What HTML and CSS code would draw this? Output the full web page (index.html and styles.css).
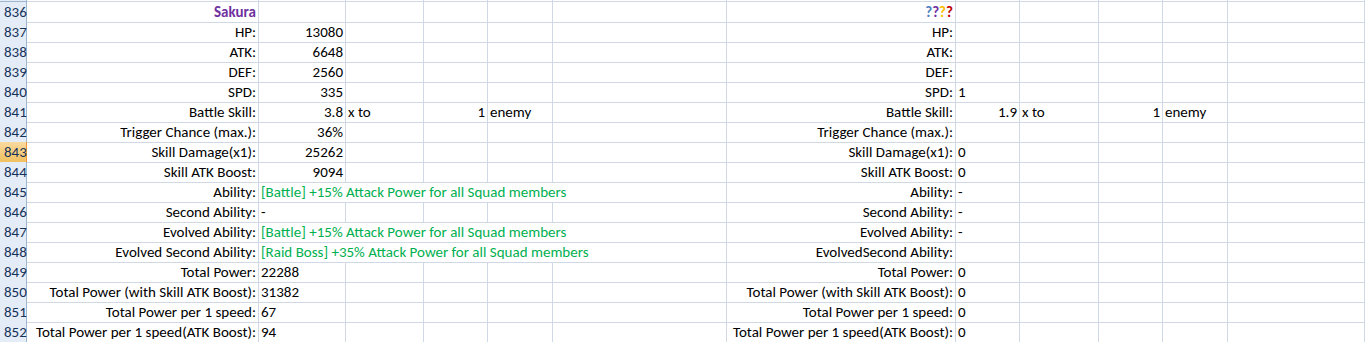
FILE: index.html
```html
<!DOCTYPE html>
<html>
<head>
<meta charset="utf-8">
<link rel="stylesheet" href="styles.css">
</head>
<body>
<div class="sheet">
  <div class="row top"><div class="rh"></div><div class="c"></div><div class="c"></div><div class="c"></div><div class="c"></div><div class="c"></div><div class="c"></div><div class="c"></div><div class="c"></div><div class="c"></div><div class="c"></div><div class="c"></div><div class="c"></div></div>

  <div class="row"><div class="rh">836</div><div class="c r name">Sakura</div><div class="c"></div><div class="c"></div><div class="c"></div><div class="c"></div><div class="c"></div><div class="c r qq"><span class="q1">?</span><span class="q2">?</span><span class="q3">?</span><span class="q4">?</span></div><div class="c"></div><div class="c"></div><div class="c"></div><div class="c"></div><div class="c"></div></div>

  <div class="row"><div class="rh">837</div><div class="c r">HP:</div><div class="c r">13080</div><div class="c"></div><div class="c"></div><div class="c"></div><div class="c"></div><div class="c r">HP:</div><div class="c"></div><div class="c"></div><div class="c"></div><div class="c"></div><div class="c"></div></div>

  <div class="row"><div class="rh">838</div><div class="c r">ATK:</div><div class="c r">6648</div><div class="c"></div><div class="c"></div><div class="c"></div><div class="c"></div><div class="c r">ATK:</div><div class="c"></div><div class="c"></div><div class="c"></div><div class="c"></div><div class="c"></div></div>

  <div class="row"><div class="rh">839</div><div class="c r">DEF:</div><div class="c r">2560</div><div class="c"></div><div class="c"></div><div class="c"></div><div class="c"></div><div class="c r">DEF:</div><div class="c"></div><div class="c"></div><div class="c"></div><div class="c"></div><div class="c"></div></div>

  <div class="row"><div class="rh">840</div><div class="c r">SPD:</div><div class="c r">335</div><div class="c"></div><div class="c"></div><div class="c"></div><div class="c"></div><div class="c r">SPD:</div><div class="c">1</div><div class="c"></div><div class="c"></div><div class="c"></div><div class="c"></div></div>

  <div class="row"><div class="rh">841</div><div class="c r">Battle Skill:</div><div class="c r">3.8</div><div class="c">x to</div><div class="c r">1</div><div class="c">enemy</div><div class="c"></div><div class="c r">Battle Skill:</div><div class="c r">1.9</div><div class="c">x to</div><div class="c r">1</div><div class="c">enemy</div><div class="c"></div></div>

  <div class="row"><div class="rh">842</div><div class="c r">Trigger Chance (max.):</div><div class="c r">36%</div><div class="c"></div><div class="c"></div><div class="c"></div><div class="c"></div><div class="c r">Trigger Chance (max.):</div><div class="c"></div><div class="c"></div><div class="c"></div><div class="c"></div><div class="c"></div></div>

  <div class="row"><div class="rh sel">843</div><div class="c r">Skill Damage(x1):</div><div class="c r">25262</div><div class="c"></div><div class="c"></div><div class="c"></div><div class="c"></div><div class="c r">Skill Damage(x1):</div><div class="c">0</div><div class="c"></div><div class="c"></div><div class="c"></div><div class="c"></div></div>

  <div class="row"><div class="rh">844</div><div class="c r">Skill ATK Boost:</div><div class="c r">9094</div><div class="c"></div><div class="c"></div><div class="c"></div><div class="c"></div><div class="c r">Skill ATK Boost:</div><div class="c">0</div><div class="c"></div><div class="c"></div><div class="c"></div><div class="c"></div></div>

  <div class="row"><div class="rh">845</div><div class="c r">Ability:</div><div class="c g span5">[Battle] +15% Attack Power for all Squad members</div><div class="c r">Ability:</div><div class="c">-</div><div class="c"></div><div class="c"></div><div class="c"></div><div class="c"></div></div>

  <div class="row"><div class="rh">846</div><div class="c r">Second Ability:</div><div class="c">-</div><div class="c"></div><div class="c"></div><div class="c"></div><div class="c"></div><div class="c r">Second Ability:</div><div class="c">-</div><div class="c"></div><div class="c"></div><div class="c"></div><div class="c"></div></div>

  <div class="row"><div class="rh">847</div><div class="c r">Evolved Ability:</div><div class="c g span5">[Battle] +15% Attack Power for all Squad members</div><div class="c r">Evolved Ability:</div><div class="c">-</div><div class="c"></div><div class="c"></div><div class="c"></div><div class="c"></div></div>

  <div class="row"><div class="rh">848</div><div class="c r">Evolved Second Ability:</div><div class="c g span5">[Raid Boss] +35% Attack Power for all Squad members</div><div class="c r">EvolvedSecond Ability:</div><div class="c"></div><div class="c"></div><div class="c"></div><div class="c"></div><div class="c"></div></div>

  <div class="row"><div class="rh">849</div><div class="c r">Total Power:</div><div class="c">22288</div><div class="c"></div><div class="c"></div><div class="c"></div><div class="c"></div><div class="c r">Total Power:</div><div class="c">0</div><div class="c"></div><div class="c"></div><div class="c"></div><div class="c"></div></div>

  <div class="row"><div class="rh">850</div><div class="c r">Total Power (with Skill ATK Boost):</div><div class="c">31382</div><div class="c"></div><div class="c"></div><div class="c"></div><div class="c"></div><div class="c r">Total Power (with Skill ATK Boost):</div><div class="c">0</div><div class="c"></div><div class="c"></div><div class="c"></div><div class="c"></div></div>

  <div class="row"><div class="rh">851</div><div class="c r">Total Power per 1 speed:</div><div class="c">67</div><div class="c"></div><div class="c"></div><div class="c"></div><div class="c"></div><div class="c r">Total Power per 1 speed:</div><div class="c">0</div><div class="c"></div><div class="c"></div><div class="c"></div><div class="c"></div></div>

  <div class="row"><div class="rh">852</div><div class="c r">Total Power per 1 speed(ATK Boost):</div><div class="c">94</div><div class="c"></div><div class="c"></div><div class="c"></div><div class="c"></div><div class="c r">Total Power per 1 speed(ATK Boost):</div><div class="c">0</div><div class="c"></div><div class="c"></div><div class="c"></div><div class="c"></div></div>
</div>
</body>
</html>
```

FILE: styles.css
```css
html, body {
  margin: 0;
  padding: 0;
  background: #ffffff;
}
body {
  font-family: "Carlito", "Lato", "Liberation Sans", sans-serif;
  font-size: 15px;
  color: #000000;
  overflow: hidden;
}
.sheet {
  width: 1365px;
}
.row {
  display: grid;
  grid-template-columns: 27px 232px 87px 78px 64px 65px 174px 229px 64px 79px 64px 65px 1fr;
  height: 20px;
}
.row.top {
  height: 2px;
}
.c, .rh {
  box-sizing: border-box;
  border-right: 1px solid #d0d7e5;
  border-bottom: 1px solid #d0d7e5;
  white-space: nowrap;
  overflow: visible;
  line-height: 20px;
  padding: 0 2px 0 2px;
}
.c.r {
  text-align: right;
  padding: 0 2px 0 2px;
}
.rh {
  background: #e4ecf7;
  border-color: #9eb6ce;
  color: #15325a;
  padding-left: 4px;
}
.rh.sel {
  background: linear-gradient(#f9d99f, #f1c15f);
  border-right-color: #f29536;
  border-bottom-color: #f29536;
}
.span5 {
  grid-column: span 5;
}
.g {
  color: #00b050;
}
.name {
  color: #7030a0;
  font-weight: bold;
}
.qq {
  font-weight: bold;
}
.q1 { color: #4f81bd; }
.q2 { color: #7030a0; }
.q3 { color: #ffc000; }
.q4 { color: #c00000; }
```
